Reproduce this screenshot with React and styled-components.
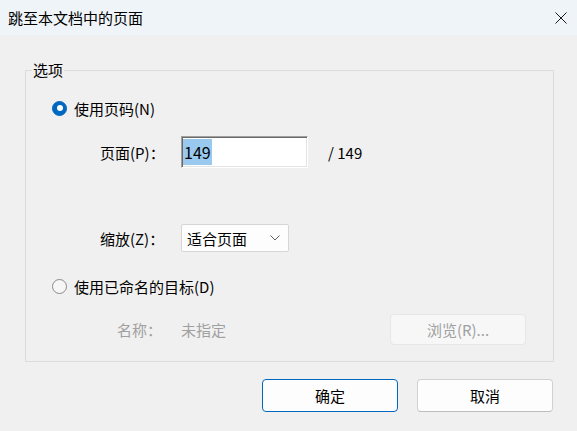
import React from 'react';
import styled, { createGlobalStyle } from 'styled-components';

const Global = createGlobalStyle`
  html, body {
    margin: 0;
    padding: 0;
    background: #f0f0f0;
  }
  body {
    font-family: "Noto Sans CJK SC", "Noto Sans", sans-serif;
    font-size: 15px;
    color: #000;
  }
`

const Window = styled.div`
  width: 577px;
  height: 431px;
  display: flex;
  flex-direction: column;
  background: #f0f0f0;
  overflow: hidden;
`

const TitleBar = styled.div`
  height: 35px;
  flex-shrink: 0;
  display: flex;
  align-items: center;
  justify-content: space-between;
  padding: 0 10px 0 8px;
  background: #eff4f9;
  font-size: 15px;
  line-height: 1;
`

const CloseBtn = styled.span`
  display: flex;
  width: 12px;
  height: 12px;
`

const Group = styled.fieldset`
  margin: 27px 0 0 25px;
  width: 529px;
  height: 300px;
  box-sizing: border-box;
  padding: 0 27px 16px 26px;
  border: 1px solid #dcdcdc;
  display: flex;
  flex-direction: column;
`

const Legend = styled.legend`
  margin-left: -20px;
  padding: 0 1px;
  font-size: 15px;
  line-height: 16px;
`

const RadioRow = styled.label`
  display: flex;
  align-items: center;
  gap: 7px;
  height: 22px;
  margin-top: ${p => p.$top}px;
  line-height: 1;
`

const Radio = styled.span`
  position: relative;
  width: 15px;
  height: 15px;
  box-sizing: border-box;
  border-radius: 50%;
  background: ${p => (p.$checked ? '#0067c0' : '#f6f6f6')};
  border: 1px solid ${p => (p.$checked ? '#0067c0' : '#8a8a8a')};
  &::after {
    content: '';
    display: ${p => (p.$checked ? 'block' : 'none')};
    position: absolute;
    left: 3.5px;
    top: 3.5px;
    width: 6px;
    height: 6px;
    border-radius: 50%;
    background: #fff;
  }
`

const FieldRow = styled.div`
  display: flex;
  align-items: center;
  height: ${p => p.$h}px;
  margin-top: ${p => p.$top}px;
  line-height: 1;
  color: ${p => (p.$disabled ? '#a0a0a0' : '#000')};
`

const Label = styled.span`
  width: 129px;
  flex-shrink: 0;
  box-sizing: border-box;
  white-space: nowrap;
  padding-left: ${p => p.$indent}px;
`

const PageBox = styled.div`
  width: 127px;
  height: 32px;
  box-sizing: border-box;
  display: flex;
  align-items: center;
  padding: 2px 1px;
  background: #fff;
  border: 1px solid;
  border-color: #a0a0a0 #ffffff #ffffff #a0a0a0;
  box-shadow: inset 1px 1px 0 #696969, inset -1px -1px 0 #e3e3e3;
`

const Selected = styled.span`
  display: flex;
  align-items: center;
  height: 100%;
  padding: 0 1px;
  background: #99c9ef;
  font-size: 16px;
`

const Total = styled.span`
  margin-left: 20px;
`

const Select = styled.div`
  width: 108px;
  height: 28px;
  box-sizing: border-box;
  display: flex;
  align-items: center;
  justify-content: space-between;
  padding: 0 8px 0 5px;
  background: #fdfdfd;
  border: 1px solid #d6d6d6;
  border-radius: 2px;
`

const Button = styled.button`
  width: 136px;
  height: ${p => p.$h || 33}px;
  box-sizing: border-box;
  font-family: inherit;
  font-size: 15px;
  border-radius: 4px;
  background: ${p => (p.$disabled ? '#f7f7f7' : '#fdfdfd')};
  color: ${p => (p.$disabled ? '#a0a0a0' : '#000')};
  border: 1px solid ${p => (p.$primary ? '#0067c0' : p.$disabled ? '#e6e6e6' : '#d1d1d1')};
  border-bottom-color: ${p => (p.$primary ? '#0067c0' : p.$disabled ? '#e6e6e6' : '#bdbdbd')};
  padding: 0;
  margin-left: ${p => (p.$push ? 'auto' : '0')};
`

const Footer = styled.div`
  display: flex;
  justify-content: flex-end;
  gap: 19px;
  margin-top: 17px;
  padding-right: 24px;
`

const Chevron = () => (
  <svg width="10" height="6" viewBox="0 0 10 6">
    <path d="M0.5 0.5 L5 5 L9.5 0.5" fill="none" stroke="#606060" strokeWidth="1" />
  </svg>
);

export default function App() {
  return (
    <Window>
      <Global />
      <TitleBar>
        <span>跳至本文档中的页面</span>
        <CloseBtn>
          <svg width="12" height="12" viewBox="0 0 12 12">
            <path d="M0.5 0.5 L11.5 11.5 M11.5 0.5 L0.5 11.5" stroke="#1a1a1a" strokeWidth="1" />
          </svg>
        </CloseBtn>
      </TitleBar>

      <Group>
        <Legend>选项</Legend>

        <RadioRow $top={19}>
          <Radio $checked />
          <span>使用页码(N)</span>
        </RadioRow>

        <FieldRow $top={17} $h={32}>
          <Label $indent={48}>页面(P)：</Label>
          <PageBox>
            <Selected>149</Selected>
          </PageBox>
          <Total>/ 149</Total>
        </FieldRow>

        <FieldRow $top={56} $h={28}>
          <Label $indent={48}>缩放(Z)：</Label>
          <Select>
            <span>适合页面</span>
            <Chevron />
          </Select>
        </FieldRow>

        <RadioRow $top={23}>
          <Radio />
          <span>使用已命名的目标(D)</span>
        </RadioRow>

        <FieldRow $top={17} $h={31} $disabled>
          <Label $indent={65}>名称：</Label>
          <span>未指定</span>
          <Button $disabled $push $h={31}>浏览(R)...</Button>
        </FieldRow>
      </Group>

      <Footer>
        <Button $primary>确定</Button>
        <Button>取消</Button>
      </Footer>
    </Window>
  );
}
